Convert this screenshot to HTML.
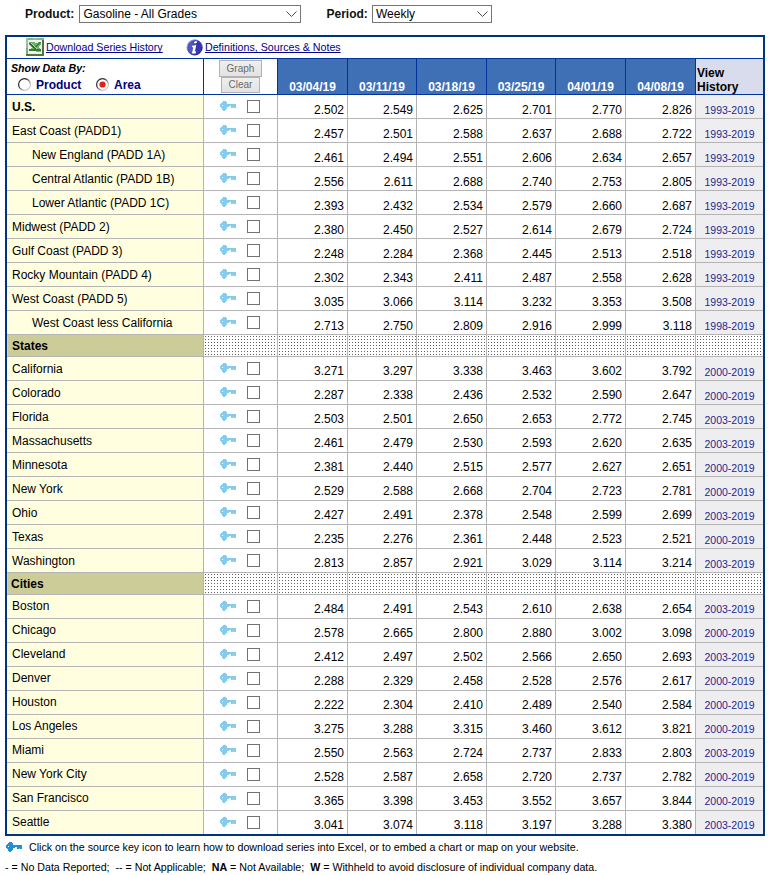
<!DOCTYPE html>
<html><head><meta charset="utf-8"><style>
html,body{margin:0;padding:0;background:#fff;width:770px;height:875px;overflow:hidden;position:relative}
body>div{position:absolute;box-sizing:content-box;font-family:"Liberation Sans",sans-serif}
svg{display:block}
</style></head><body>
<div style="left:25px;top:5.84px;font-size:12px;line-height:16px;font-weight:bold;color:#111;white-space:nowrap;">Product:</div>
<div style="left:79px;top:5px;width:220px;height:16px;border:1px solid #767676;background:#fff"></div>
<div style="left:83.5px;top:5.84px;font-size:12px;line-height:16px;font-weight:normal;color:#000;white-space:nowrap;">Gasoline - All Grades</div>
<div style="left:286px;top:11px;width:11px;height:7px"><svg width="11" height="7" viewBox="0 0 11 7"><path d="M0.5 0.5 L5.5 5.5 L10.5 0.5" fill="none" stroke="#4a4a4a" stroke-width="1"/></svg></div>
<div style="left:326.5px;top:5.84px;font-size:12px;line-height:16px;font-weight:bold;color:#111;white-space:nowrap;">Period:</div>
<div style="left:372px;top:5px;width:118px;height:16px;border:1px solid #767676;background:#fff"></div>
<div style="left:376px;top:5.84px;font-size:12px;line-height:16px;font-weight:normal;color:#000;white-space:nowrap;">Weekly</div>
<div style="left:477px;top:11px;width:11px;height:7px"><svg width="11" height="7" viewBox="0 0 11 7"><path d="M0.5 0.5 L5.5 5.5 L10.5 0.5" fill="none" stroke="#4a4a4a" stroke-width="1"/></svg></div>
<div style="left:5px;top:35px;width:760px;height:2px;background:#003380"></div>
<div style="left:5px;top:834px;width:760px;height:2px;background:#003380"></div>
<div style="left:5px;top:35px;width:2px;height:801px;background:#003380"></div>
<div style="left:763px;top:35px;width:2px;height:801px;background:#003380"></div>
<div style="left:7px;top:58px;width:756px;height:1px;background:#0033a0"></div>
<div style="left:26px;top:38px;width:18px;height:18px"><svg width="18" height="18" viewBox="0 0 18 18" shape-rendering="crispEdges">
<rect x="0" y="0" width="18" height="18" fill="#5e9a5a"/>
<rect x="0" y="0" width="18" height="2" fill="#7dbd7d"/>
<rect x="0" y="0" width="2" height="16" fill="#8ccc8c"/>
<rect x="7" y="0" width="4" height="2" fill="#a3b5a3"/>
<rect x="0" y="6" width="2" height="4" fill="#a3b1a3"/>
<rect x="0" y="10" width="2" height="6" fill="#6fb46f"/>
<rect x="16" y="2" width="2" height="9" fill="#4f6f55"/>
<rect x="16" y="11" width="2" height="7" fill="#3f7a3a"/>
<rect x="0" y="16" width="18" height="2" fill="#4b7a34"/>
<rect x="2" y="2" width="14" height="14" fill="#f1f0f3"/>
<polygon points="3,4 8,4 9,5 11,5 12,4 15,4 15,6 12,9 15,11 15,13 3,13 3,11 6,10 3,7" fill="#6cb46c"/>
<polygon points="3,5 5,5 13,13 10,13" fill="#2f6a2f"/>
<polygon points="13,4 15,4 10,9 8,9" fill="#3f7f32"/>
<polygon points="4,5 5,5 12,12 11,12" fill="#a8e0a8"/>
<rect x="3" y="11" width="12" height="2" fill="#3f7630"/>
<rect x="10" y="13" width="5" height="1" fill="#b5a26a"/>
</svg></div>
<div style="left:46px;top:39.30px;font-size:10.667px;line-height:16px;font-weight:normal;color:#000088;white-space:nowrap;"><span style="text-decoration:underline;text-decoration-skip-ink:none">Download Series History</span></div>
<div style="left:186px;top:39px;width:17px;height:17px"><svg width="17" height="17" viewBox="0 0 17 17">
<defs><linearGradient id="ig" x1="0" y1="0" x2="1" y2="0"><stop offset="0.3" stop-color="#5555c4"/><stop offset="0.6" stop-color="#3535b4"/></linearGradient>
<linearGradient id="ir" x1="0" y1="0" x2="1" y2="1"><stop offset="0.2" stop-color="#7aa8e8"/><stop offset="0.5" stop-color="#3b3bb8"/><stop offset="0.8" stop-color="#101080"/></linearGradient></defs>
<circle cx="8.6" cy="8.4" r="7.6" fill="url(#ig)" stroke="url(#ir)" stroke-width="0.9"/>
<ellipse cx="9.5" cy="3.2" rx="1.6" ry="1.05" transform="rotate(-20 9.5 3.2)" fill="#fff"/>
<path d="M6.2 6.8 L10.3 6.1 L8.9 12.3 L10.1 12.5 L9.7 14.4 L5.9 14.4 L7.3 8.3 L6.0 8.3 Z" fill="#fff"/>
</svg></div>
<div style="left:205px;top:39.30px;font-size:10.667px;line-height:16px;font-weight:normal;color:#000088;white-space:nowrap;"><span style="text-decoration:underline;text-decoration-skip-ink:none">Definitions, Sources &amp; Notes</span></div>
<div style="left:7px;top:94px;width:756px;height:1px;background:#0033a0"></div>
<div style="left:203px;top:59px;width:1px;height:35px;background:#0033a0"></div>
<div style="left:277px;top:59px;width:1px;height:35px;background:#0033a0"></div>
<div style="left:347px;top:59px;width:1px;height:35px;background:#0033a0"></div>
<div style="left:416px;top:59px;width:1px;height:35px;background:#0033a0"></div>
<div style="left:486px;top:59px;width:1px;height:35px;background:#0033a0"></div>
<div style="left:555px;top:59px;width:1px;height:35px;background:#0033a0"></div>
<div style="left:625px;top:59px;width:1px;height:35px;background:#0033a0"></div>
<div style="left:695px;top:59px;width:1px;height:35px;background:#0033a0"></div>
<div style="left:11px;top:60.30px;font-size:10.667px;line-height:16px;font-weight:bold;color:#000;white-space:nowrap;"><i>Show Data By:</i></div>
<div style="left:18px;top:78px;width:13px;height:13px"><svg width="13" height="13" viewBox="0 0 13 13"><defs><linearGradient id="rg18" x1="0" y1="0" x2="1" y2="1"><stop offset="0.35" stop-color="#2a2a2a"/><stop offset="0.75" stop-color="#c8c8c8"/></linearGradient></defs><circle cx="6.5" cy="6.5" r="5.9" fill="#fff" stroke="url(#rg18)" stroke-width="1.2"/></svg></div>
<div style="left:36px;top:76.84px;font-size:12px;line-height:16px;font-weight:bold;color:#000080;white-space:nowrap;">Product</div>
<div style="left:96px;top:78px;width:13px;height:13px"><svg width="13" height="13" viewBox="0 0 13 13"><defs><linearGradient id="rg96" x1="0" y1="0" x2="1" y2="1"><stop offset="0.35" stop-color="#2a2a2a"/><stop offset="0.75" stop-color="#c8c8c8"/></linearGradient></defs><circle cx="6.5" cy="6.5" r="5.9" fill="#fff" stroke="url(#rg96)" stroke-width="1.2"/><circle cx="6.5" cy="6.5" r="3.1" fill="#e0201a"/></svg></div>
<div style="left:114px;top:76.84px;font-size:12px;line-height:16px;font-weight:bold;color:#000080;white-space:nowrap;">Area</div>
<div style="left:219px;top:60px;width:41px;height:15px;border:1px solid #b2b2b2;background:linear-gradient(#efefef,#e2e2e2)"></div>
<div style="left:219px;width:43px;text-align:center;top:60.53px;font-size:10px;line-height:16px;font-weight:normal;color:#6a6a6a;white-space:nowrap;">Graph</div>
<div style="left:221px;top:77px;width:37px;height:14px;border:1px solid #b2b2b2;background:linear-gradient(#efefef,#e2e2e2)"></div>
<div style="left:221px;width:39px;text-align:center;top:76.53px;font-size:10px;line-height:16px;font-weight:normal;color:#6a6a6a;white-space:nowrap;">Clear</div>
<div style="left:278px;top:59px;width:69px;height:35px;background:#3f6fb5"></div>
<div style="left:278px;width:69px;text-align:center;top:78.84px;font-size:12px;line-height:16px;font-weight:bold;color:#fff;white-space:nowrap;">03/04/19</div>
<div style="left:348px;top:59px;width:68px;height:35px;background:#3f6fb5"></div>
<div style="left:348px;width:68px;text-align:center;top:78.84px;font-size:12px;line-height:16px;font-weight:bold;color:#fff;white-space:nowrap;">03/11/19</div>
<div style="left:417px;top:59px;width:69px;height:35px;background:#3f6fb5"></div>
<div style="left:417px;width:69px;text-align:center;top:78.84px;font-size:12px;line-height:16px;font-weight:bold;color:#fff;white-space:nowrap;">03/18/19</div>
<div style="left:487px;top:59px;width:68px;height:35px;background:#3f6fb5"></div>
<div style="left:487px;width:68px;text-align:center;top:78.84px;font-size:12px;line-height:16px;font-weight:bold;color:#fff;white-space:nowrap;">03/25/19</div>
<div style="left:556px;top:59px;width:69px;height:35px;background:#3f6fb5"></div>
<div style="left:556px;width:69px;text-align:center;top:78.84px;font-size:12px;line-height:16px;font-weight:bold;color:#fff;white-space:nowrap;">04/01/19</div>
<div style="left:626px;top:59px;width:69px;height:35px;background:#3f6fb5"></div>
<div style="left:626px;width:69px;text-align:center;top:78.84px;font-size:12px;line-height:16px;font-weight:bold;color:#fff;white-space:nowrap;">04/08/19</div>
<div style="left:696px;top:59px;width:67px;height:35px;background:#d9dcec"></div>
<div style="left:697px;top:64.84px;font-size:12px;line-height:16px;font-weight:bold;color:#000;white-space:nowrap;">View</div>
<div style="left:697px;top:78.84px;font-size:12px;line-height:16px;font-weight:bold;color:#000;white-space:nowrap;">History</div>
<div style="left:7px;top:95px;width:196px;height:23px;background:#ffffe0"></div>
<div style="left:696px;top:95px;width:67px;height:23px;background:#eeeef0"></div>
<div style="left:12px;top:98.84px;font-size:12px;line-height:16px;font-weight:bold;color:#000;white-space:nowrap;">U.S.</div>
<div style="left:220px;top:101px;width:16px;height:10px"><svg width="16" height="10" viewBox="0 0 16 10" shape-rendering="crispEdges"><g fill="#86cbec"><rect x="3" y="0" width="3" height="1"/><rect x="2" y="1" width="5" height="1"/><rect x="1" y="2" width="6" height="1"/><rect x="0" y="3" width="16" height="1"/><rect x="0" y="4" width="16" height="1"/><rect x="0" y="5" width="9" height="1"/><rect x="11" y="5" width="5" height="1"/><rect x="1" y="6" width="6" height="1"/><rect x="11" y="6" width="5" height="1"/><rect x="2" y="7" width="5" height="1"/><rect x="2" y="8" width="4" height="1"/><rect x="3" y="9" width="2" height="1"/></g><rect x="2" y="4" width="1" height="1" fill="#fff"/><rect x="13" y="6" width="1" height="1" fill="#b8e4f0"/></svg></div>
<div style="left:247px;top:100px;width:11px;height:11px;border:1px solid #727272;background:#fff"></div>
<div style="right:426px;top:101.84px;font-size:12px;line-height:16px;font-weight:normal;color:#000;white-space:nowrap;">2.502</div>
<div style="right:357px;top:101.84px;font-size:12px;line-height:16px;font-weight:normal;color:#000;white-space:nowrap;">2.549</div>
<div style="right:287px;top:101.84px;font-size:12px;line-height:16px;font-weight:normal;color:#000;white-space:nowrap;">2.625</div>
<div style="right:218px;top:101.84px;font-size:12px;line-height:16px;font-weight:normal;color:#000;white-space:nowrap;">2.701</div>
<div style="right:148px;top:101.84px;font-size:12px;line-height:16px;font-weight:normal;color:#000;white-space:nowrap;">2.770</div>
<div style="right:78px;top:101.84px;font-size:12px;line-height:16px;font-weight:normal;color:#000;white-space:nowrap;">2.826</div>
<div style="left:704.5px;top:102.36px;font-size:10.5px;line-height:16px;font-weight:normal;color:#26268f;white-space:nowrap;">1993-2019</div>
<div style="left:7px;top:118px;width:756px;height:1px;background:#b4b4b4"></div>
<div style="left:7px;top:119px;width:196px;height:23px;background:#ffffe0"></div>
<div style="left:696px;top:119px;width:67px;height:23px;background:#eeeef0"></div>
<div style="left:12px;top:122.84px;font-size:12px;line-height:16px;font-weight:normal;color:#000;white-space:nowrap;">East Coast (PADD1)</div>
<div style="left:220px;top:125px;width:16px;height:10px"><svg width="16" height="10" viewBox="0 0 16 10" shape-rendering="crispEdges"><g fill="#86cbec"><rect x="3" y="0" width="3" height="1"/><rect x="2" y="1" width="5" height="1"/><rect x="1" y="2" width="6" height="1"/><rect x="0" y="3" width="16" height="1"/><rect x="0" y="4" width="16" height="1"/><rect x="0" y="5" width="9" height="1"/><rect x="11" y="5" width="5" height="1"/><rect x="1" y="6" width="6" height="1"/><rect x="11" y="6" width="5" height="1"/><rect x="2" y="7" width="5" height="1"/><rect x="2" y="8" width="4" height="1"/><rect x="3" y="9" width="2" height="1"/></g><rect x="2" y="4" width="1" height="1" fill="#fff"/><rect x="13" y="6" width="1" height="1" fill="#b8e4f0"/></svg></div>
<div style="left:247px;top:124px;width:11px;height:11px;border:1px solid #727272;background:#fff"></div>
<div style="right:426px;top:125.84px;font-size:12px;line-height:16px;font-weight:normal;color:#000;white-space:nowrap;">2.457</div>
<div style="right:357px;top:125.84px;font-size:12px;line-height:16px;font-weight:normal;color:#000;white-space:nowrap;">2.501</div>
<div style="right:287px;top:125.84px;font-size:12px;line-height:16px;font-weight:normal;color:#000;white-space:nowrap;">2.588</div>
<div style="right:218px;top:125.84px;font-size:12px;line-height:16px;font-weight:normal;color:#000;white-space:nowrap;">2.637</div>
<div style="right:148px;top:125.84px;font-size:12px;line-height:16px;font-weight:normal;color:#000;white-space:nowrap;">2.688</div>
<div style="right:78px;top:125.84px;font-size:12px;line-height:16px;font-weight:normal;color:#000;white-space:nowrap;">2.722</div>
<div style="left:704.5px;top:126.36px;font-size:10.5px;line-height:16px;font-weight:normal;color:#26268f;white-space:nowrap;">1993-2019</div>
<div style="left:7px;top:142px;width:756px;height:1px;background:#b4b4b4"></div>
<div style="left:7px;top:143px;width:196px;height:23px;background:#ffffe0"></div>
<div style="left:696px;top:143px;width:67px;height:23px;background:#eeeef0"></div>
<div style="left:32px;top:146.84px;font-size:12px;line-height:16px;font-weight:normal;color:#000;white-space:nowrap;">New England (PADD 1A)</div>
<div style="left:220px;top:149px;width:16px;height:10px"><svg width="16" height="10" viewBox="0 0 16 10" shape-rendering="crispEdges"><g fill="#86cbec"><rect x="3" y="0" width="3" height="1"/><rect x="2" y="1" width="5" height="1"/><rect x="1" y="2" width="6" height="1"/><rect x="0" y="3" width="16" height="1"/><rect x="0" y="4" width="16" height="1"/><rect x="0" y="5" width="9" height="1"/><rect x="11" y="5" width="5" height="1"/><rect x="1" y="6" width="6" height="1"/><rect x="11" y="6" width="5" height="1"/><rect x="2" y="7" width="5" height="1"/><rect x="2" y="8" width="4" height="1"/><rect x="3" y="9" width="2" height="1"/></g><rect x="2" y="4" width="1" height="1" fill="#fff"/><rect x="13" y="6" width="1" height="1" fill="#b8e4f0"/></svg></div>
<div style="left:247px;top:148px;width:11px;height:11px;border:1px solid #727272;background:#fff"></div>
<div style="right:426px;top:149.84px;font-size:12px;line-height:16px;font-weight:normal;color:#000;white-space:nowrap;">2.461</div>
<div style="right:357px;top:149.84px;font-size:12px;line-height:16px;font-weight:normal;color:#000;white-space:nowrap;">2.494</div>
<div style="right:287px;top:149.84px;font-size:12px;line-height:16px;font-weight:normal;color:#000;white-space:nowrap;">2.551</div>
<div style="right:218px;top:149.84px;font-size:12px;line-height:16px;font-weight:normal;color:#000;white-space:nowrap;">2.606</div>
<div style="right:148px;top:149.84px;font-size:12px;line-height:16px;font-weight:normal;color:#000;white-space:nowrap;">2.634</div>
<div style="right:78px;top:149.84px;font-size:12px;line-height:16px;font-weight:normal;color:#000;white-space:nowrap;">2.657</div>
<div style="left:704.5px;top:150.36px;font-size:10.5px;line-height:16px;font-weight:normal;color:#26268f;white-space:nowrap;">1993-2019</div>
<div style="left:7px;top:166px;width:756px;height:1px;background:#b4b4b4"></div>
<div style="left:7px;top:167px;width:196px;height:23px;background:#ffffe0"></div>
<div style="left:696px;top:167px;width:67px;height:23px;background:#eeeef0"></div>
<div style="left:32px;top:170.84px;font-size:12px;line-height:16px;font-weight:normal;color:#000;white-space:nowrap;">Central Atlantic (PADD 1B)</div>
<div style="left:220px;top:173px;width:16px;height:10px"><svg width="16" height="10" viewBox="0 0 16 10" shape-rendering="crispEdges"><g fill="#86cbec"><rect x="3" y="0" width="3" height="1"/><rect x="2" y="1" width="5" height="1"/><rect x="1" y="2" width="6" height="1"/><rect x="0" y="3" width="16" height="1"/><rect x="0" y="4" width="16" height="1"/><rect x="0" y="5" width="9" height="1"/><rect x="11" y="5" width="5" height="1"/><rect x="1" y="6" width="6" height="1"/><rect x="11" y="6" width="5" height="1"/><rect x="2" y="7" width="5" height="1"/><rect x="2" y="8" width="4" height="1"/><rect x="3" y="9" width="2" height="1"/></g><rect x="2" y="4" width="1" height="1" fill="#fff"/><rect x="13" y="6" width="1" height="1" fill="#b8e4f0"/></svg></div>
<div style="left:247px;top:172px;width:11px;height:11px;border:1px solid #727272;background:#fff"></div>
<div style="right:426px;top:173.84px;font-size:12px;line-height:16px;font-weight:normal;color:#000;white-space:nowrap;">2.556</div>
<div style="right:357px;top:173.84px;font-size:12px;line-height:16px;font-weight:normal;color:#000;white-space:nowrap;">2.611</div>
<div style="right:287px;top:173.84px;font-size:12px;line-height:16px;font-weight:normal;color:#000;white-space:nowrap;">2.688</div>
<div style="right:218px;top:173.84px;font-size:12px;line-height:16px;font-weight:normal;color:#000;white-space:nowrap;">2.740</div>
<div style="right:148px;top:173.84px;font-size:12px;line-height:16px;font-weight:normal;color:#000;white-space:nowrap;">2.753</div>
<div style="right:78px;top:173.84px;font-size:12px;line-height:16px;font-weight:normal;color:#000;white-space:nowrap;">2.805</div>
<div style="left:704.5px;top:174.36px;font-size:10.5px;line-height:16px;font-weight:normal;color:#26268f;white-space:nowrap;">1993-2019</div>
<div style="left:7px;top:190px;width:756px;height:1px;background:#b4b4b4"></div>
<div style="left:7px;top:191px;width:196px;height:23px;background:#ffffe0"></div>
<div style="left:696px;top:191px;width:67px;height:23px;background:#eeeef0"></div>
<div style="left:32px;top:194.84px;font-size:12px;line-height:16px;font-weight:normal;color:#000;white-space:nowrap;">Lower Atlantic (PADD 1C)</div>
<div style="left:220px;top:197px;width:16px;height:10px"><svg width="16" height="10" viewBox="0 0 16 10" shape-rendering="crispEdges"><g fill="#86cbec"><rect x="3" y="0" width="3" height="1"/><rect x="2" y="1" width="5" height="1"/><rect x="1" y="2" width="6" height="1"/><rect x="0" y="3" width="16" height="1"/><rect x="0" y="4" width="16" height="1"/><rect x="0" y="5" width="9" height="1"/><rect x="11" y="5" width="5" height="1"/><rect x="1" y="6" width="6" height="1"/><rect x="11" y="6" width="5" height="1"/><rect x="2" y="7" width="5" height="1"/><rect x="2" y="8" width="4" height="1"/><rect x="3" y="9" width="2" height="1"/></g><rect x="2" y="4" width="1" height="1" fill="#fff"/><rect x="13" y="6" width="1" height="1" fill="#b8e4f0"/></svg></div>
<div style="left:247px;top:196px;width:11px;height:11px;border:1px solid #727272;background:#fff"></div>
<div style="right:426px;top:197.84px;font-size:12px;line-height:16px;font-weight:normal;color:#000;white-space:nowrap;">2.393</div>
<div style="right:357px;top:197.84px;font-size:12px;line-height:16px;font-weight:normal;color:#000;white-space:nowrap;">2.432</div>
<div style="right:287px;top:197.84px;font-size:12px;line-height:16px;font-weight:normal;color:#000;white-space:nowrap;">2.534</div>
<div style="right:218px;top:197.84px;font-size:12px;line-height:16px;font-weight:normal;color:#000;white-space:nowrap;">2.579</div>
<div style="right:148px;top:197.84px;font-size:12px;line-height:16px;font-weight:normal;color:#000;white-space:nowrap;">2.660</div>
<div style="right:78px;top:197.84px;font-size:12px;line-height:16px;font-weight:normal;color:#000;white-space:nowrap;">2.687</div>
<div style="left:704.5px;top:198.36px;font-size:10.5px;line-height:16px;font-weight:normal;color:#26268f;white-space:nowrap;">1993-2019</div>
<div style="left:7px;top:214px;width:756px;height:1px;background:#b4b4b4"></div>
<div style="left:7px;top:215px;width:196px;height:23px;background:#ffffe0"></div>
<div style="left:696px;top:215px;width:67px;height:23px;background:#eeeef0"></div>
<div style="left:12px;top:218.84px;font-size:12px;line-height:16px;font-weight:normal;color:#000;white-space:nowrap;">Midwest (PADD 2)</div>
<div style="left:220px;top:221px;width:16px;height:10px"><svg width="16" height="10" viewBox="0 0 16 10" shape-rendering="crispEdges"><g fill="#86cbec"><rect x="3" y="0" width="3" height="1"/><rect x="2" y="1" width="5" height="1"/><rect x="1" y="2" width="6" height="1"/><rect x="0" y="3" width="16" height="1"/><rect x="0" y="4" width="16" height="1"/><rect x="0" y="5" width="9" height="1"/><rect x="11" y="5" width="5" height="1"/><rect x="1" y="6" width="6" height="1"/><rect x="11" y="6" width="5" height="1"/><rect x="2" y="7" width="5" height="1"/><rect x="2" y="8" width="4" height="1"/><rect x="3" y="9" width="2" height="1"/></g><rect x="2" y="4" width="1" height="1" fill="#fff"/><rect x="13" y="6" width="1" height="1" fill="#b8e4f0"/></svg></div>
<div style="left:247px;top:220px;width:11px;height:11px;border:1px solid #727272;background:#fff"></div>
<div style="right:426px;top:221.84px;font-size:12px;line-height:16px;font-weight:normal;color:#000;white-space:nowrap;">2.380</div>
<div style="right:357px;top:221.84px;font-size:12px;line-height:16px;font-weight:normal;color:#000;white-space:nowrap;">2.450</div>
<div style="right:287px;top:221.84px;font-size:12px;line-height:16px;font-weight:normal;color:#000;white-space:nowrap;">2.527</div>
<div style="right:218px;top:221.84px;font-size:12px;line-height:16px;font-weight:normal;color:#000;white-space:nowrap;">2.614</div>
<div style="right:148px;top:221.84px;font-size:12px;line-height:16px;font-weight:normal;color:#000;white-space:nowrap;">2.679</div>
<div style="right:78px;top:221.84px;font-size:12px;line-height:16px;font-weight:normal;color:#000;white-space:nowrap;">2.724</div>
<div style="left:704.5px;top:222.36px;font-size:10.5px;line-height:16px;font-weight:normal;color:#26268f;white-space:nowrap;">1993-2019</div>
<div style="left:7px;top:238px;width:756px;height:1px;background:#b4b4b4"></div>
<div style="left:7px;top:239px;width:196px;height:23px;background:#ffffe0"></div>
<div style="left:696px;top:239px;width:67px;height:23px;background:#eeeef0"></div>
<div style="left:12px;top:242.84px;font-size:12px;line-height:16px;font-weight:normal;color:#000;white-space:nowrap;">Gulf Coast (PADD 3)</div>
<div style="left:220px;top:245px;width:16px;height:10px"><svg width="16" height="10" viewBox="0 0 16 10" shape-rendering="crispEdges"><g fill="#86cbec"><rect x="3" y="0" width="3" height="1"/><rect x="2" y="1" width="5" height="1"/><rect x="1" y="2" width="6" height="1"/><rect x="0" y="3" width="16" height="1"/><rect x="0" y="4" width="16" height="1"/><rect x="0" y="5" width="9" height="1"/><rect x="11" y="5" width="5" height="1"/><rect x="1" y="6" width="6" height="1"/><rect x="11" y="6" width="5" height="1"/><rect x="2" y="7" width="5" height="1"/><rect x="2" y="8" width="4" height="1"/><rect x="3" y="9" width="2" height="1"/></g><rect x="2" y="4" width="1" height="1" fill="#fff"/><rect x="13" y="6" width="1" height="1" fill="#b8e4f0"/></svg></div>
<div style="left:247px;top:244px;width:11px;height:11px;border:1px solid #727272;background:#fff"></div>
<div style="right:426px;top:245.84px;font-size:12px;line-height:16px;font-weight:normal;color:#000;white-space:nowrap;">2.248</div>
<div style="right:357px;top:245.84px;font-size:12px;line-height:16px;font-weight:normal;color:#000;white-space:nowrap;">2.284</div>
<div style="right:287px;top:245.84px;font-size:12px;line-height:16px;font-weight:normal;color:#000;white-space:nowrap;">2.368</div>
<div style="right:218px;top:245.84px;font-size:12px;line-height:16px;font-weight:normal;color:#000;white-space:nowrap;">2.445</div>
<div style="right:148px;top:245.84px;font-size:12px;line-height:16px;font-weight:normal;color:#000;white-space:nowrap;">2.513</div>
<div style="right:78px;top:245.84px;font-size:12px;line-height:16px;font-weight:normal;color:#000;white-space:nowrap;">2.518</div>
<div style="left:704.5px;top:246.36px;font-size:10.5px;line-height:16px;font-weight:normal;color:#26268f;white-space:nowrap;">1993-2019</div>
<div style="left:7px;top:262px;width:756px;height:1px;background:#b4b4b4"></div>
<div style="left:7px;top:263px;width:196px;height:23px;background:#ffffe0"></div>
<div style="left:696px;top:263px;width:67px;height:23px;background:#eeeef0"></div>
<div style="left:12px;top:266.84px;font-size:12px;line-height:16px;font-weight:normal;color:#000;white-space:nowrap;">Rocky Mountain (PADD 4)</div>
<div style="left:220px;top:269px;width:16px;height:10px"><svg width="16" height="10" viewBox="0 0 16 10" shape-rendering="crispEdges"><g fill="#86cbec"><rect x="3" y="0" width="3" height="1"/><rect x="2" y="1" width="5" height="1"/><rect x="1" y="2" width="6" height="1"/><rect x="0" y="3" width="16" height="1"/><rect x="0" y="4" width="16" height="1"/><rect x="0" y="5" width="9" height="1"/><rect x="11" y="5" width="5" height="1"/><rect x="1" y="6" width="6" height="1"/><rect x="11" y="6" width="5" height="1"/><rect x="2" y="7" width="5" height="1"/><rect x="2" y="8" width="4" height="1"/><rect x="3" y="9" width="2" height="1"/></g><rect x="2" y="4" width="1" height="1" fill="#fff"/><rect x="13" y="6" width="1" height="1" fill="#b8e4f0"/></svg></div>
<div style="left:247px;top:268px;width:11px;height:11px;border:1px solid #727272;background:#fff"></div>
<div style="right:426px;top:269.84px;font-size:12px;line-height:16px;font-weight:normal;color:#000;white-space:nowrap;">2.302</div>
<div style="right:357px;top:269.84px;font-size:12px;line-height:16px;font-weight:normal;color:#000;white-space:nowrap;">2.343</div>
<div style="right:287px;top:269.84px;font-size:12px;line-height:16px;font-weight:normal;color:#000;white-space:nowrap;">2.411</div>
<div style="right:218px;top:269.84px;font-size:12px;line-height:16px;font-weight:normal;color:#000;white-space:nowrap;">2.487</div>
<div style="right:148px;top:269.84px;font-size:12px;line-height:16px;font-weight:normal;color:#000;white-space:nowrap;">2.558</div>
<div style="right:78px;top:269.84px;font-size:12px;line-height:16px;font-weight:normal;color:#000;white-space:nowrap;">2.628</div>
<div style="left:704.5px;top:270.36px;font-size:10.5px;line-height:16px;font-weight:normal;color:#26268f;white-space:nowrap;">1993-2019</div>
<div style="left:7px;top:286px;width:756px;height:1px;background:#b4b4b4"></div>
<div style="left:7px;top:287px;width:196px;height:23px;background:#ffffe0"></div>
<div style="left:696px;top:287px;width:67px;height:23px;background:#eeeef0"></div>
<div style="left:12px;top:290.84px;font-size:12px;line-height:16px;font-weight:normal;color:#000;white-space:nowrap;">West Coast (PADD 5)</div>
<div style="left:220px;top:293px;width:16px;height:10px"><svg width="16" height="10" viewBox="0 0 16 10" shape-rendering="crispEdges"><g fill="#86cbec"><rect x="3" y="0" width="3" height="1"/><rect x="2" y="1" width="5" height="1"/><rect x="1" y="2" width="6" height="1"/><rect x="0" y="3" width="16" height="1"/><rect x="0" y="4" width="16" height="1"/><rect x="0" y="5" width="9" height="1"/><rect x="11" y="5" width="5" height="1"/><rect x="1" y="6" width="6" height="1"/><rect x="11" y="6" width="5" height="1"/><rect x="2" y="7" width="5" height="1"/><rect x="2" y="8" width="4" height="1"/><rect x="3" y="9" width="2" height="1"/></g><rect x="2" y="4" width="1" height="1" fill="#fff"/><rect x="13" y="6" width="1" height="1" fill="#b8e4f0"/></svg></div>
<div style="left:247px;top:292px;width:11px;height:11px;border:1px solid #727272;background:#fff"></div>
<div style="right:426px;top:293.84px;font-size:12px;line-height:16px;font-weight:normal;color:#000;white-space:nowrap;">3.035</div>
<div style="right:357px;top:293.84px;font-size:12px;line-height:16px;font-weight:normal;color:#000;white-space:nowrap;">3.066</div>
<div style="right:287px;top:293.84px;font-size:12px;line-height:16px;font-weight:normal;color:#000;white-space:nowrap;">3.114</div>
<div style="right:218px;top:293.84px;font-size:12px;line-height:16px;font-weight:normal;color:#000;white-space:nowrap;">3.232</div>
<div style="right:148px;top:293.84px;font-size:12px;line-height:16px;font-weight:normal;color:#000;white-space:nowrap;">3.353</div>
<div style="right:78px;top:293.84px;font-size:12px;line-height:16px;font-weight:normal;color:#000;white-space:nowrap;">3.508</div>
<div style="left:704.5px;top:294.36px;font-size:10.5px;line-height:16px;font-weight:normal;color:#26268f;white-space:nowrap;">1993-2019</div>
<div style="left:7px;top:310px;width:756px;height:1px;background:#b4b4b4"></div>
<div style="left:7px;top:311px;width:196px;height:23px;background:#ffffe0"></div>
<div style="left:696px;top:311px;width:67px;height:23px;background:#eeeef0"></div>
<div style="left:32px;top:314.84px;font-size:12px;line-height:16px;font-weight:normal;color:#000;white-space:nowrap;">West Coast less California</div>
<div style="left:220px;top:317px;width:16px;height:10px"><svg width="16" height="10" viewBox="0 0 16 10" shape-rendering="crispEdges"><g fill="#86cbec"><rect x="3" y="0" width="3" height="1"/><rect x="2" y="1" width="5" height="1"/><rect x="1" y="2" width="6" height="1"/><rect x="0" y="3" width="16" height="1"/><rect x="0" y="4" width="16" height="1"/><rect x="0" y="5" width="9" height="1"/><rect x="11" y="5" width="5" height="1"/><rect x="1" y="6" width="6" height="1"/><rect x="11" y="6" width="5" height="1"/><rect x="2" y="7" width="5" height="1"/><rect x="2" y="8" width="4" height="1"/><rect x="3" y="9" width="2" height="1"/></g><rect x="2" y="4" width="1" height="1" fill="#fff"/><rect x="13" y="6" width="1" height="1" fill="#b8e4f0"/></svg></div>
<div style="left:247px;top:316px;width:11px;height:11px;border:1px solid #727272;background:#fff"></div>
<div style="right:426px;top:317.84px;font-size:12px;line-height:16px;font-weight:normal;color:#000;white-space:nowrap;">2.713</div>
<div style="right:357px;top:317.84px;font-size:12px;line-height:16px;font-weight:normal;color:#000;white-space:nowrap;">2.750</div>
<div style="right:287px;top:317.84px;font-size:12px;line-height:16px;font-weight:normal;color:#000;white-space:nowrap;">2.809</div>
<div style="right:218px;top:317.84px;font-size:12px;line-height:16px;font-weight:normal;color:#000;white-space:nowrap;">2.916</div>
<div style="right:148px;top:317.84px;font-size:12px;line-height:16px;font-weight:normal;color:#000;white-space:nowrap;">2.999</div>
<div style="right:78px;top:317.84px;font-size:12px;line-height:16px;font-weight:normal;color:#000;white-space:nowrap;">3.118</div>
<div style="left:704.5px;top:318.36px;font-size:10.5px;line-height:16px;font-weight:normal;color:#26268f;white-space:nowrap;">1998-2019</div>
<div style="left:7px;top:334px;width:756px;height:1px;background:#b4b4b4"></div>
<div style="left:7px;top:335px;width:196px;height:21px;background:#cccc99"></div>
<div style="left:7px;top:335px;width:1px;height:21px;background:#dcd79e"></div>
<div style="left:12px;top:337.84px;font-size:12px;line-height:16px;font-weight:bold;color:#000;white-space:nowrap;">States</div>
<div style="left:204px;top:335px;width:73px;height:21px;background-color:#606060;background-image:linear-gradient(to bottom, transparent 1px, #fff 1px),linear-gradient(to right, transparent 1px, #fff 1px);background-size:3px 3px;background-position:1px 1px"></div>
<div style="left:204px;top:335px;width:73px;height:1px;background:#fff"></div>
<div style="left:204px;top:335px;width:1px;height:21px;background:#fff"></div>
<div style="left:278px;top:335px;width:69px;height:21px;background-color:#606060;background-image:linear-gradient(to bottom, transparent 1px, #fff 1px),linear-gradient(to right, transparent 1px, #fff 1px);background-size:3px 3px;background-position:1px 1px"></div>
<div style="left:278px;top:335px;width:69px;height:1px;background:#fff"></div>
<div style="left:278px;top:335px;width:1px;height:21px;background:#fff"></div>
<div style="left:348px;top:335px;width:68px;height:21px;background-color:#606060;background-image:linear-gradient(to bottom, transparent 1px, #fff 1px),linear-gradient(to right, transparent 1px, #fff 1px);background-size:3px 3px;background-position:1px 1px"></div>
<div style="left:348px;top:335px;width:68px;height:1px;background:#fff"></div>
<div style="left:348px;top:335px;width:1px;height:21px;background:#fff"></div>
<div style="left:417px;top:335px;width:69px;height:21px;background-color:#606060;background-image:linear-gradient(to bottom, transparent 1px, #fff 1px),linear-gradient(to right, transparent 1px, #fff 1px);background-size:3px 3px;background-position:1px 1px"></div>
<div style="left:417px;top:335px;width:69px;height:1px;background:#fff"></div>
<div style="left:417px;top:335px;width:1px;height:21px;background:#fff"></div>
<div style="left:487px;top:335px;width:68px;height:21px;background-color:#606060;background-image:linear-gradient(to bottom, transparent 1px, #fff 1px),linear-gradient(to right, transparent 1px, #fff 1px);background-size:3px 3px;background-position:1px 1px"></div>
<div style="left:487px;top:335px;width:68px;height:1px;background:#fff"></div>
<div style="left:487px;top:335px;width:1px;height:21px;background:#fff"></div>
<div style="left:556px;top:335px;width:69px;height:21px;background-color:#606060;background-image:linear-gradient(to bottom, transparent 1px, #fff 1px),linear-gradient(to right, transparent 1px, #fff 1px);background-size:3px 3px;background-position:1px 1px"></div>
<div style="left:556px;top:335px;width:69px;height:1px;background:#fff"></div>
<div style="left:556px;top:335px;width:1px;height:21px;background:#fff"></div>
<div style="left:626px;top:335px;width:69px;height:21px;background-color:#606060;background-image:linear-gradient(to bottom, transparent 1px, #fff 1px),linear-gradient(to right, transparent 1px, #fff 1px);background-size:3px 3px;background-position:1px 1px"></div>
<div style="left:626px;top:335px;width:69px;height:1px;background:#fff"></div>
<div style="left:626px;top:335px;width:1px;height:21px;background:#fff"></div>
<div style="left:696px;top:335px;width:67px;height:21px;background-color:#606060;background-image:linear-gradient(to bottom, transparent 1px, #fff 1px),linear-gradient(to right, transparent 1px, #fff 1px);background-size:3px 3px;background-position:1px 1px"></div>
<div style="left:696px;top:335px;width:67px;height:1px;background:#fff"></div>
<div style="left:696px;top:335px;width:1px;height:21px;background:#fff"></div>
<div style="left:7px;top:356px;width:756px;height:1px;background:#b4b4b4"></div>
<div style="left:7px;top:357px;width:196px;height:23px;background:#ffffe0"></div>
<div style="left:696px;top:357px;width:67px;height:23px;background:#eeeef0"></div>
<div style="left:12px;top:360.84px;font-size:12px;line-height:16px;font-weight:normal;color:#000;white-space:nowrap;">California</div>
<div style="left:220px;top:363px;width:16px;height:10px"><svg width="16" height="10" viewBox="0 0 16 10" shape-rendering="crispEdges"><g fill="#86cbec"><rect x="3" y="0" width="3" height="1"/><rect x="2" y="1" width="5" height="1"/><rect x="1" y="2" width="6" height="1"/><rect x="0" y="3" width="16" height="1"/><rect x="0" y="4" width="16" height="1"/><rect x="0" y="5" width="9" height="1"/><rect x="11" y="5" width="5" height="1"/><rect x="1" y="6" width="6" height="1"/><rect x="11" y="6" width="5" height="1"/><rect x="2" y="7" width="5" height="1"/><rect x="2" y="8" width="4" height="1"/><rect x="3" y="9" width="2" height="1"/></g><rect x="2" y="4" width="1" height="1" fill="#fff"/><rect x="13" y="6" width="1" height="1" fill="#b8e4f0"/></svg></div>
<div style="left:247px;top:362px;width:11px;height:11px;border:1px solid #727272;background:#fff"></div>
<div style="right:426px;top:362.84px;font-size:12px;line-height:16px;font-weight:normal;color:#000;white-space:nowrap;">3.271</div>
<div style="right:357px;top:362.84px;font-size:12px;line-height:16px;font-weight:normal;color:#000;white-space:nowrap;">3.297</div>
<div style="right:287px;top:362.84px;font-size:12px;line-height:16px;font-weight:normal;color:#000;white-space:nowrap;">3.338</div>
<div style="right:218px;top:362.84px;font-size:12px;line-height:16px;font-weight:normal;color:#000;white-space:nowrap;">3.463</div>
<div style="right:148px;top:362.84px;font-size:12px;line-height:16px;font-weight:normal;color:#000;white-space:nowrap;">3.602</div>
<div style="right:78px;top:362.84px;font-size:12px;line-height:16px;font-weight:normal;color:#000;white-space:nowrap;">3.792</div>
<div style="left:704.5px;top:364.36px;font-size:10.5px;line-height:16px;font-weight:normal;color:#26268f;white-space:nowrap;">2000-2019</div>
<div style="left:7px;top:380px;width:756px;height:1px;background:#b4b4b4"></div>
<div style="left:7px;top:381px;width:196px;height:23px;background:#ffffe0"></div>
<div style="left:696px;top:381px;width:67px;height:23px;background:#eeeef0"></div>
<div style="left:12px;top:384.84px;font-size:12px;line-height:16px;font-weight:normal;color:#000;white-space:nowrap;">Colorado</div>
<div style="left:220px;top:387px;width:16px;height:10px"><svg width="16" height="10" viewBox="0 0 16 10" shape-rendering="crispEdges"><g fill="#86cbec"><rect x="3" y="0" width="3" height="1"/><rect x="2" y="1" width="5" height="1"/><rect x="1" y="2" width="6" height="1"/><rect x="0" y="3" width="16" height="1"/><rect x="0" y="4" width="16" height="1"/><rect x="0" y="5" width="9" height="1"/><rect x="11" y="5" width="5" height="1"/><rect x="1" y="6" width="6" height="1"/><rect x="11" y="6" width="5" height="1"/><rect x="2" y="7" width="5" height="1"/><rect x="2" y="8" width="4" height="1"/><rect x="3" y="9" width="2" height="1"/></g><rect x="2" y="4" width="1" height="1" fill="#fff"/><rect x="13" y="6" width="1" height="1" fill="#b8e4f0"/></svg></div>
<div style="left:247px;top:386px;width:11px;height:11px;border:1px solid #727272;background:#fff"></div>
<div style="right:426px;top:386.84px;font-size:12px;line-height:16px;font-weight:normal;color:#000;white-space:nowrap;">2.287</div>
<div style="right:357px;top:386.84px;font-size:12px;line-height:16px;font-weight:normal;color:#000;white-space:nowrap;">2.338</div>
<div style="right:287px;top:386.84px;font-size:12px;line-height:16px;font-weight:normal;color:#000;white-space:nowrap;">2.436</div>
<div style="right:218px;top:386.84px;font-size:12px;line-height:16px;font-weight:normal;color:#000;white-space:nowrap;">2.532</div>
<div style="right:148px;top:386.84px;font-size:12px;line-height:16px;font-weight:normal;color:#000;white-space:nowrap;">2.590</div>
<div style="right:78px;top:386.84px;font-size:12px;line-height:16px;font-weight:normal;color:#000;white-space:nowrap;">2.647</div>
<div style="left:704.5px;top:388.36px;font-size:10.5px;line-height:16px;font-weight:normal;color:#26268f;white-space:nowrap;">2000-2019</div>
<div style="left:7px;top:404px;width:756px;height:1px;background:#b4b4b4"></div>
<div style="left:7px;top:405px;width:196px;height:23px;background:#ffffe0"></div>
<div style="left:696px;top:405px;width:67px;height:23px;background:#eeeef0"></div>
<div style="left:12px;top:408.84px;font-size:12px;line-height:16px;font-weight:normal;color:#000;white-space:nowrap;">Florida</div>
<div style="left:220px;top:411px;width:16px;height:10px"><svg width="16" height="10" viewBox="0 0 16 10" shape-rendering="crispEdges"><g fill="#86cbec"><rect x="3" y="0" width="3" height="1"/><rect x="2" y="1" width="5" height="1"/><rect x="1" y="2" width="6" height="1"/><rect x="0" y="3" width="16" height="1"/><rect x="0" y="4" width="16" height="1"/><rect x="0" y="5" width="9" height="1"/><rect x="11" y="5" width="5" height="1"/><rect x="1" y="6" width="6" height="1"/><rect x="11" y="6" width="5" height="1"/><rect x="2" y="7" width="5" height="1"/><rect x="2" y="8" width="4" height="1"/><rect x="3" y="9" width="2" height="1"/></g><rect x="2" y="4" width="1" height="1" fill="#fff"/><rect x="13" y="6" width="1" height="1" fill="#b8e4f0"/></svg></div>
<div style="left:247px;top:410px;width:11px;height:11px;border:1px solid #727272;background:#fff"></div>
<div style="right:426px;top:410.84px;font-size:12px;line-height:16px;font-weight:normal;color:#000;white-space:nowrap;">2.503</div>
<div style="right:357px;top:410.84px;font-size:12px;line-height:16px;font-weight:normal;color:#000;white-space:nowrap;">2.501</div>
<div style="right:287px;top:410.84px;font-size:12px;line-height:16px;font-weight:normal;color:#000;white-space:nowrap;">2.650</div>
<div style="right:218px;top:410.84px;font-size:12px;line-height:16px;font-weight:normal;color:#000;white-space:nowrap;">2.653</div>
<div style="right:148px;top:410.84px;font-size:12px;line-height:16px;font-weight:normal;color:#000;white-space:nowrap;">2.772</div>
<div style="right:78px;top:410.84px;font-size:12px;line-height:16px;font-weight:normal;color:#000;white-space:nowrap;">2.745</div>
<div style="left:704.5px;top:412.36px;font-size:10.5px;line-height:16px;font-weight:normal;color:#26268f;white-space:nowrap;">2003-2019</div>
<div style="left:7px;top:428px;width:756px;height:1px;background:#b4b4b4"></div>
<div style="left:7px;top:429px;width:196px;height:23px;background:#ffffe0"></div>
<div style="left:696px;top:429px;width:67px;height:23px;background:#eeeef0"></div>
<div style="left:12px;top:432.84px;font-size:12px;line-height:16px;font-weight:normal;color:#000;white-space:nowrap;">Massachusetts</div>
<div style="left:220px;top:435px;width:16px;height:10px"><svg width="16" height="10" viewBox="0 0 16 10" shape-rendering="crispEdges"><g fill="#86cbec"><rect x="3" y="0" width="3" height="1"/><rect x="2" y="1" width="5" height="1"/><rect x="1" y="2" width="6" height="1"/><rect x="0" y="3" width="16" height="1"/><rect x="0" y="4" width="16" height="1"/><rect x="0" y="5" width="9" height="1"/><rect x="11" y="5" width="5" height="1"/><rect x="1" y="6" width="6" height="1"/><rect x="11" y="6" width="5" height="1"/><rect x="2" y="7" width="5" height="1"/><rect x="2" y="8" width="4" height="1"/><rect x="3" y="9" width="2" height="1"/></g><rect x="2" y="4" width="1" height="1" fill="#fff"/><rect x="13" y="6" width="1" height="1" fill="#b8e4f0"/></svg></div>
<div style="left:247px;top:434px;width:11px;height:11px;border:1px solid #727272;background:#fff"></div>
<div style="right:426px;top:434.84px;font-size:12px;line-height:16px;font-weight:normal;color:#000;white-space:nowrap;">2.461</div>
<div style="right:357px;top:434.84px;font-size:12px;line-height:16px;font-weight:normal;color:#000;white-space:nowrap;">2.479</div>
<div style="right:287px;top:434.84px;font-size:12px;line-height:16px;font-weight:normal;color:#000;white-space:nowrap;">2.530</div>
<div style="right:218px;top:434.84px;font-size:12px;line-height:16px;font-weight:normal;color:#000;white-space:nowrap;">2.593</div>
<div style="right:148px;top:434.84px;font-size:12px;line-height:16px;font-weight:normal;color:#000;white-space:nowrap;">2.620</div>
<div style="right:78px;top:434.84px;font-size:12px;line-height:16px;font-weight:normal;color:#000;white-space:nowrap;">2.635</div>
<div style="left:704.5px;top:436.36px;font-size:10.5px;line-height:16px;font-weight:normal;color:#26268f;white-space:nowrap;">2003-2019</div>
<div style="left:7px;top:452px;width:756px;height:1px;background:#b4b4b4"></div>
<div style="left:7px;top:453px;width:196px;height:23px;background:#ffffe0"></div>
<div style="left:696px;top:453px;width:67px;height:23px;background:#eeeef0"></div>
<div style="left:12px;top:456.84px;font-size:12px;line-height:16px;font-weight:normal;color:#000;white-space:nowrap;">Minnesota</div>
<div style="left:220px;top:459px;width:16px;height:10px"><svg width="16" height="10" viewBox="0 0 16 10" shape-rendering="crispEdges"><g fill="#86cbec"><rect x="3" y="0" width="3" height="1"/><rect x="2" y="1" width="5" height="1"/><rect x="1" y="2" width="6" height="1"/><rect x="0" y="3" width="16" height="1"/><rect x="0" y="4" width="16" height="1"/><rect x="0" y="5" width="9" height="1"/><rect x="11" y="5" width="5" height="1"/><rect x="1" y="6" width="6" height="1"/><rect x="11" y="6" width="5" height="1"/><rect x="2" y="7" width="5" height="1"/><rect x="2" y="8" width="4" height="1"/><rect x="3" y="9" width="2" height="1"/></g><rect x="2" y="4" width="1" height="1" fill="#fff"/><rect x="13" y="6" width="1" height="1" fill="#b8e4f0"/></svg></div>
<div style="left:247px;top:458px;width:11px;height:11px;border:1px solid #727272;background:#fff"></div>
<div style="right:426px;top:458.84px;font-size:12px;line-height:16px;font-weight:normal;color:#000;white-space:nowrap;">2.381</div>
<div style="right:357px;top:458.84px;font-size:12px;line-height:16px;font-weight:normal;color:#000;white-space:nowrap;">2.440</div>
<div style="right:287px;top:458.84px;font-size:12px;line-height:16px;font-weight:normal;color:#000;white-space:nowrap;">2.515</div>
<div style="right:218px;top:458.84px;font-size:12px;line-height:16px;font-weight:normal;color:#000;white-space:nowrap;">2.577</div>
<div style="right:148px;top:458.84px;font-size:12px;line-height:16px;font-weight:normal;color:#000;white-space:nowrap;">2.627</div>
<div style="right:78px;top:458.84px;font-size:12px;line-height:16px;font-weight:normal;color:#000;white-space:nowrap;">2.651</div>
<div style="left:704.5px;top:460.36px;font-size:10.5px;line-height:16px;font-weight:normal;color:#26268f;white-space:nowrap;">2000-2019</div>
<div style="left:7px;top:476px;width:756px;height:1px;background:#b4b4b4"></div>
<div style="left:7px;top:477px;width:196px;height:23px;background:#ffffe0"></div>
<div style="left:696px;top:477px;width:67px;height:23px;background:#eeeef0"></div>
<div style="left:12px;top:480.84px;font-size:12px;line-height:16px;font-weight:normal;color:#000;white-space:nowrap;">New York</div>
<div style="left:220px;top:483px;width:16px;height:10px"><svg width="16" height="10" viewBox="0 0 16 10" shape-rendering="crispEdges"><g fill="#86cbec"><rect x="3" y="0" width="3" height="1"/><rect x="2" y="1" width="5" height="1"/><rect x="1" y="2" width="6" height="1"/><rect x="0" y="3" width="16" height="1"/><rect x="0" y="4" width="16" height="1"/><rect x="0" y="5" width="9" height="1"/><rect x="11" y="5" width="5" height="1"/><rect x="1" y="6" width="6" height="1"/><rect x="11" y="6" width="5" height="1"/><rect x="2" y="7" width="5" height="1"/><rect x="2" y="8" width="4" height="1"/><rect x="3" y="9" width="2" height="1"/></g><rect x="2" y="4" width="1" height="1" fill="#fff"/><rect x="13" y="6" width="1" height="1" fill="#b8e4f0"/></svg></div>
<div style="left:247px;top:482px;width:11px;height:11px;border:1px solid #727272;background:#fff"></div>
<div style="right:426px;top:482.84px;font-size:12px;line-height:16px;font-weight:normal;color:#000;white-space:nowrap;">2.529</div>
<div style="right:357px;top:482.84px;font-size:12px;line-height:16px;font-weight:normal;color:#000;white-space:nowrap;">2.588</div>
<div style="right:287px;top:482.84px;font-size:12px;line-height:16px;font-weight:normal;color:#000;white-space:nowrap;">2.668</div>
<div style="right:218px;top:482.84px;font-size:12px;line-height:16px;font-weight:normal;color:#000;white-space:nowrap;">2.704</div>
<div style="right:148px;top:482.84px;font-size:12px;line-height:16px;font-weight:normal;color:#000;white-space:nowrap;">2.723</div>
<div style="right:78px;top:482.84px;font-size:12px;line-height:16px;font-weight:normal;color:#000;white-space:nowrap;">2.781</div>
<div style="left:704.5px;top:484.36px;font-size:10.5px;line-height:16px;font-weight:normal;color:#26268f;white-space:nowrap;">2000-2019</div>
<div style="left:7px;top:500px;width:756px;height:1px;background:#b4b4b4"></div>
<div style="left:7px;top:501px;width:196px;height:23px;background:#ffffe0"></div>
<div style="left:696px;top:501px;width:67px;height:23px;background:#eeeef0"></div>
<div style="left:12px;top:504.84px;font-size:12px;line-height:16px;font-weight:normal;color:#000;white-space:nowrap;">Ohio</div>
<div style="left:220px;top:507px;width:16px;height:10px"><svg width="16" height="10" viewBox="0 0 16 10" shape-rendering="crispEdges"><g fill="#86cbec"><rect x="3" y="0" width="3" height="1"/><rect x="2" y="1" width="5" height="1"/><rect x="1" y="2" width="6" height="1"/><rect x="0" y="3" width="16" height="1"/><rect x="0" y="4" width="16" height="1"/><rect x="0" y="5" width="9" height="1"/><rect x="11" y="5" width="5" height="1"/><rect x="1" y="6" width="6" height="1"/><rect x="11" y="6" width="5" height="1"/><rect x="2" y="7" width="5" height="1"/><rect x="2" y="8" width="4" height="1"/><rect x="3" y="9" width="2" height="1"/></g><rect x="2" y="4" width="1" height="1" fill="#fff"/><rect x="13" y="6" width="1" height="1" fill="#b8e4f0"/></svg></div>
<div style="left:247px;top:506px;width:11px;height:11px;border:1px solid #727272;background:#fff"></div>
<div style="right:426px;top:506.84px;font-size:12px;line-height:16px;font-weight:normal;color:#000;white-space:nowrap;">2.427</div>
<div style="right:357px;top:506.84px;font-size:12px;line-height:16px;font-weight:normal;color:#000;white-space:nowrap;">2.491</div>
<div style="right:287px;top:506.84px;font-size:12px;line-height:16px;font-weight:normal;color:#000;white-space:nowrap;">2.378</div>
<div style="right:218px;top:506.84px;font-size:12px;line-height:16px;font-weight:normal;color:#000;white-space:nowrap;">2.548</div>
<div style="right:148px;top:506.84px;font-size:12px;line-height:16px;font-weight:normal;color:#000;white-space:nowrap;">2.599</div>
<div style="right:78px;top:506.84px;font-size:12px;line-height:16px;font-weight:normal;color:#000;white-space:nowrap;">2.699</div>
<div style="left:704.5px;top:508.36px;font-size:10.5px;line-height:16px;font-weight:normal;color:#26268f;white-space:nowrap;">2003-2019</div>
<div style="left:7px;top:524px;width:756px;height:1px;background:#b4b4b4"></div>
<div style="left:7px;top:525px;width:196px;height:23px;background:#ffffe0"></div>
<div style="left:696px;top:525px;width:67px;height:23px;background:#eeeef0"></div>
<div style="left:12px;top:528.84px;font-size:12px;line-height:16px;font-weight:normal;color:#000;white-space:nowrap;">Texas</div>
<div style="left:220px;top:531px;width:16px;height:10px"><svg width="16" height="10" viewBox="0 0 16 10" shape-rendering="crispEdges"><g fill="#86cbec"><rect x="3" y="0" width="3" height="1"/><rect x="2" y="1" width="5" height="1"/><rect x="1" y="2" width="6" height="1"/><rect x="0" y="3" width="16" height="1"/><rect x="0" y="4" width="16" height="1"/><rect x="0" y="5" width="9" height="1"/><rect x="11" y="5" width="5" height="1"/><rect x="1" y="6" width="6" height="1"/><rect x="11" y="6" width="5" height="1"/><rect x="2" y="7" width="5" height="1"/><rect x="2" y="8" width="4" height="1"/><rect x="3" y="9" width="2" height="1"/></g><rect x="2" y="4" width="1" height="1" fill="#fff"/><rect x="13" y="6" width="1" height="1" fill="#b8e4f0"/></svg></div>
<div style="left:247px;top:530px;width:11px;height:11px;border:1px solid #727272;background:#fff"></div>
<div style="right:426px;top:530.84px;font-size:12px;line-height:16px;font-weight:normal;color:#000;white-space:nowrap;">2.235</div>
<div style="right:357px;top:530.84px;font-size:12px;line-height:16px;font-weight:normal;color:#000;white-space:nowrap;">2.276</div>
<div style="right:287px;top:530.84px;font-size:12px;line-height:16px;font-weight:normal;color:#000;white-space:nowrap;">2.361</div>
<div style="right:218px;top:530.84px;font-size:12px;line-height:16px;font-weight:normal;color:#000;white-space:nowrap;">2.448</div>
<div style="right:148px;top:530.84px;font-size:12px;line-height:16px;font-weight:normal;color:#000;white-space:nowrap;">2.523</div>
<div style="right:78px;top:530.84px;font-size:12px;line-height:16px;font-weight:normal;color:#000;white-space:nowrap;">2.521</div>
<div style="left:704.5px;top:532.36px;font-size:10.5px;line-height:16px;font-weight:normal;color:#26268f;white-space:nowrap;">2000-2019</div>
<div style="left:7px;top:548px;width:756px;height:1px;background:#b4b4b4"></div>
<div style="left:7px;top:549px;width:196px;height:23px;background:#ffffe0"></div>
<div style="left:696px;top:549px;width:67px;height:23px;background:#eeeef0"></div>
<div style="left:12px;top:552.84px;font-size:12px;line-height:16px;font-weight:normal;color:#000;white-space:nowrap;">Washington</div>
<div style="left:220px;top:555px;width:16px;height:10px"><svg width="16" height="10" viewBox="0 0 16 10" shape-rendering="crispEdges"><g fill="#86cbec"><rect x="3" y="0" width="3" height="1"/><rect x="2" y="1" width="5" height="1"/><rect x="1" y="2" width="6" height="1"/><rect x="0" y="3" width="16" height="1"/><rect x="0" y="4" width="16" height="1"/><rect x="0" y="5" width="9" height="1"/><rect x="11" y="5" width="5" height="1"/><rect x="1" y="6" width="6" height="1"/><rect x="11" y="6" width="5" height="1"/><rect x="2" y="7" width="5" height="1"/><rect x="2" y="8" width="4" height="1"/><rect x="3" y="9" width="2" height="1"/></g><rect x="2" y="4" width="1" height="1" fill="#fff"/><rect x="13" y="6" width="1" height="1" fill="#b8e4f0"/></svg></div>
<div style="left:247px;top:554px;width:11px;height:11px;border:1px solid #727272;background:#fff"></div>
<div style="right:426px;top:554.84px;font-size:12px;line-height:16px;font-weight:normal;color:#000;white-space:nowrap;">2.813</div>
<div style="right:357px;top:554.84px;font-size:12px;line-height:16px;font-weight:normal;color:#000;white-space:nowrap;">2.857</div>
<div style="right:287px;top:554.84px;font-size:12px;line-height:16px;font-weight:normal;color:#000;white-space:nowrap;">2.921</div>
<div style="right:218px;top:554.84px;font-size:12px;line-height:16px;font-weight:normal;color:#000;white-space:nowrap;">3.029</div>
<div style="right:148px;top:554.84px;font-size:12px;line-height:16px;font-weight:normal;color:#000;white-space:nowrap;">3.114</div>
<div style="right:78px;top:554.84px;font-size:12px;line-height:16px;font-weight:normal;color:#000;white-space:nowrap;">3.214</div>
<div style="left:704.5px;top:556.36px;font-size:10.5px;line-height:16px;font-weight:normal;color:#26268f;white-space:nowrap;">2003-2019</div>
<div style="left:7px;top:572px;width:756px;height:1px;background:#b4b4b4"></div>
<div style="left:7px;top:573px;width:196px;height:21px;background:#cccc99"></div>
<div style="left:7px;top:573px;width:1px;height:21px;background:#dcd79e"></div>
<div style="left:11px;top:575.84px;font-size:12px;line-height:16px;font-weight:bold;color:#000;white-space:nowrap;">Cities</div>
<div style="left:204px;top:573px;width:73px;height:21px;background-color:#606060;background-image:linear-gradient(to bottom, transparent 1px, #fff 1px),linear-gradient(to right, transparent 1px, #fff 1px);background-size:3px 3px;background-position:1px 1px"></div>
<div style="left:204px;top:573px;width:73px;height:1px;background:#fff"></div>
<div style="left:204px;top:573px;width:1px;height:21px;background:#fff"></div>
<div style="left:278px;top:573px;width:69px;height:21px;background-color:#606060;background-image:linear-gradient(to bottom, transparent 1px, #fff 1px),linear-gradient(to right, transparent 1px, #fff 1px);background-size:3px 3px;background-position:1px 1px"></div>
<div style="left:278px;top:573px;width:69px;height:1px;background:#fff"></div>
<div style="left:278px;top:573px;width:1px;height:21px;background:#fff"></div>
<div style="left:348px;top:573px;width:68px;height:21px;background-color:#606060;background-image:linear-gradient(to bottom, transparent 1px, #fff 1px),linear-gradient(to right, transparent 1px, #fff 1px);background-size:3px 3px;background-position:1px 1px"></div>
<div style="left:348px;top:573px;width:68px;height:1px;background:#fff"></div>
<div style="left:348px;top:573px;width:1px;height:21px;background:#fff"></div>
<div style="left:417px;top:573px;width:69px;height:21px;background-color:#606060;background-image:linear-gradient(to bottom, transparent 1px, #fff 1px),linear-gradient(to right, transparent 1px, #fff 1px);background-size:3px 3px;background-position:1px 1px"></div>
<div style="left:417px;top:573px;width:69px;height:1px;background:#fff"></div>
<div style="left:417px;top:573px;width:1px;height:21px;background:#fff"></div>
<div style="left:487px;top:573px;width:68px;height:21px;background-color:#606060;background-image:linear-gradient(to bottom, transparent 1px, #fff 1px),linear-gradient(to right, transparent 1px, #fff 1px);background-size:3px 3px;background-position:1px 1px"></div>
<div style="left:487px;top:573px;width:68px;height:1px;background:#fff"></div>
<div style="left:487px;top:573px;width:1px;height:21px;background:#fff"></div>
<div style="left:556px;top:573px;width:69px;height:21px;background-color:#606060;background-image:linear-gradient(to bottom, transparent 1px, #fff 1px),linear-gradient(to right, transparent 1px, #fff 1px);background-size:3px 3px;background-position:1px 1px"></div>
<div style="left:556px;top:573px;width:69px;height:1px;background:#fff"></div>
<div style="left:556px;top:573px;width:1px;height:21px;background:#fff"></div>
<div style="left:626px;top:573px;width:69px;height:21px;background-color:#606060;background-image:linear-gradient(to bottom, transparent 1px, #fff 1px),linear-gradient(to right, transparent 1px, #fff 1px);background-size:3px 3px;background-position:1px 1px"></div>
<div style="left:626px;top:573px;width:69px;height:1px;background:#fff"></div>
<div style="left:626px;top:573px;width:1px;height:21px;background:#fff"></div>
<div style="left:696px;top:573px;width:67px;height:21px;background-color:#606060;background-image:linear-gradient(to bottom, transparent 1px, #fff 1px),linear-gradient(to right, transparent 1px, #fff 1px);background-size:3px 3px;background-position:1px 1px"></div>
<div style="left:696px;top:573px;width:67px;height:1px;background:#fff"></div>
<div style="left:696px;top:573px;width:1px;height:21px;background:#fff"></div>
<div style="left:7px;top:594px;width:756px;height:1px;background:#b4b4b4"></div>
<div style="left:7px;top:595px;width:196px;height:23px;background:#ffffe0"></div>
<div style="left:696px;top:595px;width:67px;height:23px;background:#eeeef0"></div>
<div style="left:12px;top:597.84px;font-size:12px;line-height:16px;font-weight:normal;color:#000;white-space:nowrap;">Boston</div>
<div style="left:220px;top:601px;width:16px;height:10px"><svg width="16" height="10" viewBox="0 0 16 10" shape-rendering="crispEdges"><g fill="#86cbec"><rect x="3" y="0" width="3" height="1"/><rect x="2" y="1" width="5" height="1"/><rect x="1" y="2" width="6" height="1"/><rect x="0" y="3" width="16" height="1"/><rect x="0" y="4" width="16" height="1"/><rect x="0" y="5" width="9" height="1"/><rect x="11" y="5" width="5" height="1"/><rect x="1" y="6" width="6" height="1"/><rect x="11" y="6" width="5" height="1"/><rect x="2" y="7" width="5" height="1"/><rect x="2" y="8" width="4" height="1"/><rect x="3" y="9" width="2" height="1"/></g><rect x="2" y="4" width="1" height="1" fill="#fff"/><rect x="13" y="6" width="1" height="1" fill="#b8e4f0"/></svg></div>
<div style="left:247px;top:600px;width:11px;height:11px;border:1px solid #727272;background:#fff"></div>
<div style="right:426px;top:600.84px;font-size:12px;line-height:16px;font-weight:normal;color:#000;white-space:nowrap;">2.484</div>
<div style="right:357px;top:600.84px;font-size:12px;line-height:16px;font-weight:normal;color:#000;white-space:nowrap;">2.491</div>
<div style="right:287px;top:600.84px;font-size:12px;line-height:16px;font-weight:normal;color:#000;white-space:nowrap;">2.543</div>
<div style="right:218px;top:600.84px;font-size:12px;line-height:16px;font-weight:normal;color:#000;white-space:nowrap;">2.610</div>
<div style="right:148px;top:600.84px;font-size:12px;line-height:16px;font-weight:normal;color:#000;white-space:nowrap;">2.638</div>
<div style="right:78px;top:600.84px;font-size:12px;line-height:16px;font-weight:normal;color:#000;white-space:nowrap;">2.654</div>
<div style="left:704.5px;top:601.36px;font-size:10.5px;line-height:16px;font-weight:normal;color:#26268f;white-space:nowrap;">2003-2019</div>
<div style="left:7px;top:618px;width:756px;height:1px;background:#b4b4b4"></div>
<div style="left:7px;top:619px;width:196px;height:23px;background:#ffffe0"></div>
<div style="left:696px;top:619px;width:67px;height:23px;background:#eeeef0"></div>
<div style="left:12px;top:621.84px;font-size:12px;line-height:16px;font-weight:normal;color:#000;white-space:nowrap;">Chicago</div>
<div style="left:220px;top:625px;width:16px;height:10px"><svg width="16" height="10" viewBox="0 0 16 10" shape-rendering="crispEdges"><g fill="#86cbec"><rect x="3" y="0" width="3" height="1"/><rect x="2" y="1" width="5" height="1"/><rect x="1" y="2" width="6" height="1"/><rect x="0" y="3" width="16" height="1"/><rect x="0" y="4" width="16" height="1"/><rect x="0" y="5" width="9" height="1"/><rect x="11" y="5" width="5" height="1"/><rect x="1" y="6" width="6" height="1"/><rect x="11" y="6" width="5" height="1"/><rect x="2" y="7" width="5" height="1"/><rect x="2" y="8" width="4" height="1"/><rect x="3" y="9" width="2" height="1"/></g><rect x="2" y="4" width="1" height="1" fill="#fff"/><rect x="13" y="6" width="1" height="1" fill="#b8e4f0"/></svg></div>
<div style="left:247px;top:624px;width:11px;height:11px;border:1px solid #727272;background:#fff"></div>
<div style="right:426px;top:624.84px;font-size:12px;line-height:16px;font-weight:normal;color:#000;white-space:nowrap;">2.578</div>
<div style="right:357px;top:624.84px;font-size:12px;line-height:16px;font-weight:normal;color:#000;white-space:nowrap;">2.665</div>
<div style="right:287px;top:624.84px;font-size:12px;line-height:16px;font-weight:normal;color:#000;white-space:nowrap;">2.800</div>
<div style="right:218px;top:624.84px;font-size:12px;line-height:16px;font-weight:normal;color:#000;white-space:nowrap;">2.880</div>
<div style="right:148px;top:624.84px;font-size:12px;line-height:16px;font-weight:normal;color:#000;white-space:nowrap;">3.002</div>
<div style="right:78px;top:624.84px;font-size:12px;line-height:16px;font-weight:normal;color:#000;white-space:nowrap;">3.098</div>
<div style="left:704.5px;top:625.36px;font-size:10.5px;line-height:16px;font-weight:normal;color:#26268f;white-space:nowrap;">2000-2019</div>
<div style="left:7px;top:642px;width:756px;height:1px;background:#b4b4b4"></div>
<div style="left:7px;top:643px;width:196px;height:23px;background:#ffffe0"></div>
<div style="left:696px;top:643px;width:67px;height:23px;background:#eeeef0"></div>
<div style="left:12px;top:645.84px;font-size:12px;line-height:16px;font-weight:normal;color:#000;white-space:nowrap;">Cleveland</div>
<div style="left:220px;top:649px;width:16px;height:10px"><svg width="16" height="10" viewBox="0 0 16 10" shape-rendering="crispEdges"><g fill="#86cbec"><rect x="3" y="0" width="3" height="1"/><rect x="2" y="1" width="5" height="1"/><rect x="1" y="2" width="6" height="1"/><rect x="0" y="3" width="16" height="1"/><rect x="0" y="4" width="16" height="1"/><rect x="0" y="5" width="9" height="1"/><rect x="11" y="5" width="5" height="1"/><rect x="1" y="6" width="6" height="1"/><rect x="11" y="6" width="5" height="1"/><rect x="2" y="7" width="5" height="1"/><rect x="2" y="8" width="4" height="1"/><rect x="3" y="9" width="2" height="1"/></g><rect x="2" y="4" width="1" height="1" fill="#fff"/><rect x="13" y="6" width="1" height="1" fill="#b8e4f0"/></svg></div>
<div style="left:247px;top:648px;width:11px;height:11px;border:1px solid #727272;background:#fff"></div>
<div style="right:426px;top:648.84px;font-size:12px;line-height:16px;font-weight:normal;color:#000;white-space:nowrap;">2.412</div>
<div style="right:357px;top:648.84px;font-size:12px;line-height:16px;font-weight:normal;color:#000;white-space:nowrap;">2.497</div>
<div style="right:287px;top:648.84px;font-size:12px;line-height:16px;font-weight:normal;color:#000;white-space:nowrap;">2.502</div>
<div style="right:218px;top:648.84px;font-size:12px;line-height:16px;font-weight:normal;color:#000;white-space:nowrap;">2.566</div>
<div style="right:148px;top:648.84px;font-size:12px;line-height:16px;font-weight:normal;color:#000;white-space:nowrap;">2.650</div>
<div style="right:78px;top:648.84px;font-size:12px;line-height:16px;font-weight:normal;color:#000;white-space:nowrap;">2.693</div>
<div style="left:704.5px;top:649.36px;font-size:10.5px;line-height:16px;font-weight:normal;color:#26268f;white-space:nowrap;">2003-2019</div>
<div style="left:7px;top:666px;width:756px;height:1px;background:#b4b4b4"></div>
<div style="left:7px;top:667px;width:196px;height:23px;background:#ffffe0"></div>
<div style="left:696px;top:667px;width:67px;height:23px;background:#eeeef0"></div>
<div style="left:12px;top:669.84px;font-size:12px;line-height:16px;font-weight:normal;color:#000;white-space:nowrap;">Denver</div>
<div style="left:220px;top:673px;width:16px;height:10px"><svg width="16" height="10" viewBox="0 0 16 10" shape-rendering="crispEdges"><g fill="#86cbec"><rect x="3" y="0" width="3" height="1"/><rect x="2" y="1" width="5" height="1"/><rect x="1" y="2" width="6" height="1"/><rect x="0" y="3" width="16" height="1"/><rect x="0" y="4" width="16" height="1"/><rect x="0" y="5" width="9" height="1"/><rect x="11" y="5" width="5" height="1"/><rect x="1" y="6" width="6" height="1"/><rect x="11" y="6" width="5" height="1"/><rect x="2" y="7" width="5" height="1"/><rect x="2" y="8" width="4" height="1"/><rect x="3" y="9" width="2" height="1"/></g><rect x="2" y="4" width="1" height="1" fill="#fff"/><rect x="13" y="6" width="1" height="1" fill="#b8e4f0"/></svg></div>
<div style="left:247px;top:672px;width:11px;height:11px;border:1px solid #727272;background:#fff"></div>
<div style="right:426px;top:672.84px;font-size:12px;line-height:16px;font-weight:normal;color:#000;white-space:nowrap;">2.288</div>
<div style="right:357px;top:672.84px;font-size:12px;line-height:16px;font-weight:normal;color:#000;white-space:nowrap;">2.329</div>
<div style="right:287px;top:672.84px;font-size:12px;line-height:16px;font-weight:normal;color:#000;white-space:nowrap;">2.458</div>
<div style="right:218px;top:672.84px;font-size:12px;line-height:16px;font-weight:normal;color:#000;white-space:nowrap;">2.528</div>
<div style="right:148px;top:672.84px;font-size:12px;line-height:16px;font-weight:normal;color:#000;white-space:nowrap;">2.576</div>
<div style="right:78px;top:672.84px;font-size:12px;line-height:16px;font-weight:normal;color:#000;white-space:nowrap;">2.617</div>
<div style="left:704.5px;top:673.36px;font-size:10.5px;line-height:16px;font-weight:normal;color:#26268f;white-space:nowrap;">2000-2019</div>
<div style="left:7px;top:690px;width:756px;height:1px;background:#b4b4b4"></div>
<div style="left:7px;top:691px;width:196px;height:23px;background:#ffffe0"></div>
<div style="left:696px;top:691px;width:67px;height:23px;background:#eeeef0"></div>
<div style="left:12px;top:693.84px;font-size:12px;line-height:16px;font-weight:normal;color:#000;white-space:nowrap;">Houston</div>
<div style="left:220px;top:697px;width:16px;height:10px"><svg width="16" height="10" viewBox="0 0 16 10" shape-rendering="crispEdges"><g fill="#86cbec"><rect x="3" y="0" width="3" height="1"/><rect x="2" y="1" width="5" height="1"/><rect x="1" y="2" width="6" height="1"/><rect x="0" y="3" width="16" height="1"/><rect x="0" y="4" width="16" height="1"/><rect x="0" y="5" width="9" height="1"/><rect x="11" y="5" width="5" height="1"/><rect x="1" y="6" width="6" height="1"/><rect x="11" y="6" width="5" height="1"/><rect x="2" y="7" width="5" height="1"/><rect x="2" y="8" width="4" height="1"/><rect x="3" y="9" width="2" height="1"/></g><rect x="2" y="4" width="1" height="1" fill="#fff"/><rect x="13" y="6" width="1" height="1" fill="#b8e4f0"/></svg></div>
<div style="left:247px;top:696px;width:11px;height:11px;border:1px solid #727272;background:#fff"></div>
<div style="right:426px;top:696.84px;font-size:12px;line-height:16px;font-weight:normal;color:#000;white-space:nowrap;">2.222</div>
<div style="right:357px;top:696.84px;font-size:12px;line-height:16px;font-weight:normal;color:#000;white-space:nowrap;">2.304</div>
<div style="right:287px;top:696.84px;font-size:12px;line-height:16px;font-weight:normal;color:#000;white-space:nowrap;">2.410</div>
<div style="right:218px;top:696.84px;font-size:12px;line-height:16px;font-weight:normal;color:#000;white-space:nowrap;">2.489</div>
<div style="right:148px;top:696.84px;font-size:12px;line-height:16px;font-weight:normal;color:#000;white-space:nowrap;">2.540</div>
<div style="right:78px;top:696.84px;font-size:12px;line-height:16px;font-weight:normal;color:#000;white-space:nowrap;">2.584</div>
<div style="left:704.5px;top:697.36px;font-size:10.5px;line-height:16px;font-weight:normal;color:#26268f;white-space:nowrap;">2000-2019</div>
<div style="left:7px;top:714px;width:756px;height:1px;background:#b4b4b4"></div>
<div style="left:7px;top:715px;width:196px;height:23px;background:#ffffe0"></div>
<div style="left:696px;top:715px;width:67px;height:23px;background:#eeeef0"></div>
<div style="left:12px;top:717.84px;font-size:12px;line-height:16px;font-weight:normal;color:#000;white-space:nowrap;">Los Angeles</div>
<div style="left:220px;top:721px;width:16px;height:10px"><svg width="16" height="10" viewBox="0 0 16 10" shape-rendering="crispEdges"><g fill="#86cbec"><rect x="3" y="0" width="3" height="1"/><rect x="2" y="1" width="5" height="1"/><rect x="1" y="2" width="6" height="1"/><rect x="0" y="3" width="16" height="1"/><rect x="0" y="4" width="16" height="1"/><rect x="0" y="5" width="9" height="1"/><rect x="11" y="5" width="5" height="1"/><rect x="1" y="6" width="6" height="1"/><rect x="11" y="6" width="5" height="1"/><rect x="2" y="7" width="5" height="1"/><rect x="2" y="8" width="4" height="1"/><rect x="3" y="9" width="2" height="1"/></g><rect x="2" y="4" width="1" height="1" fill="#fff"/><rect x="13" y="6" width="1" height="1" fill="#b8e4f0"/></svg></div>
<div style="left:247px;top:720px;width:11px;height:11px;border:1px solid #727272;background:#fff"></div>
<div style="right:426px;top:720.84px;font-size:12px;line-height:16px;font-weight:normal;color:#000;white-space:nowrap;">3.275</div>
<div style="right:357px;top:720.84px;font-size:12px;line-height:16px;font-weight:normal;color:#000;white-space:nowrap;">3.288</div>
<div style="right:287px;top:720.84px;font-size:12px;line-height:16px;font-weight:normal;color:#000;white-space:nowrap;">3.315</div>
<div style="right:218px;top:720.84px;font-size:12px;line-height:16px;font-weight:normal;color:#000;white-space:nowrap;">3.460</div>
<div style="right:148px;top:720.84px;font-size:12px;line-height:16px;font-weight:normal;color:#000;white-space:nowrap;">3.612</div>
<div style="right:78px;top:720.84px;font-size:12px;line-height:16px;font-weight:normal;color:#000;white-space:nowrap;">3.821</div>
<div style="left:704.5px;top:721.36px;font-size:10.5px;line-height:16px;font-weight:normal;color:#26268f;white-space:nowrap;">2000-2019</div>
<div style="left:7px;top:738px;width:756px;height:1px;background:#b4b4b4"></div>
<div style="left:7px;top:739px;width:196px;height:23px;background:#ffffe0"></div>
<div style="left:696px;top:739px;width:67px;height:23px;background:#eeeef0"></div>
<div style="left:12px;top:741.84px;font-size:12px;line-height:16px;font-weight:normal;color:#000;white-space:nowrap;">Miami</div>
<div style="left:220px;top:745px;width:16px;height:10px"><svg width="16" height="10" viewBox="0 0 16 10" shape-rendering="crispEdges"><g fill="#86cbec"><rect x="3" y="0" width="3" height="1"/><rect x="2" y="1" width="5" height="1"/><rect x="1" y="2" width="6" height="1"/><rect x="0" y="3" width="16" height="1"/><rect x="0" y="4" width="16" height="1"/><rect x="0" y="5" width="9" height="1"/><rect x="11" y="5" width="5" height="1"/><rect x="1" y="6" width="6" height="1"/><rect x="11" y="6" width="5" height="1"/><rect x="2" y="7" width="5" height="1"/><rect x="2" y="8" width="4" height="1"/><rect x="3" y="9" width="2" height="1"/></g><rect x="2" y="4" width="1" height="1" fill="#fff"/><rect x="13" y="6" width="1" height="1" fill="#b8e4f0"/></svg></div>
<div style="left:247px;top:744px;width:11px;height:11px;border:1px solid #727272;background:#fff"></div>
<div style="right:426px;top:744.84px;font-size:12px;line-height:16px;font-weight:normal;color:#000;white-space:nowrap;">2.550</div>
<div style="right:357px;top:744.84px;font-size:12px;line-height:16px;font-weight:normal;color:#000;white-space:nowrap;">2.563</div>
<div style="right:287px;top:744.84px;font-size:12px;line-height:16px;font-weight:normal;color:#000;white-space:nowrap;">2.724</div>
<div style="right:218px;top:744.84px;font-size:12px;line-height:16px;font-weight:normal;color:#000;white-space:nowrap;">2.737</div>
<div style="right:148px;top:744.84px;font-size:12px;line-height:16px;font-weight:normal;color:#000;white-space:nowrap;">2.833</div>
<div style="right:78px;top:744.84px;font-size:12px;line-height:16px;font-weight:normal;color:#000;white-space:nowrap;">2.803</div>
<div style="left:704.5px;top:745.36px;font-size:10.5px;line-height:16px;font-weight:normal;color:#26268f;white-space:nowrap;">2003-2019</div>
<div style="left:7px;top:762px;width:756px;height:1px;background:#b4b4b4"></div>
<div style="left:7px;top:763px;width:196px;height:23px;background:#ffffe0"></div>
<div style="left:696px;top:763px;width:67px;height:23px;background:#eeeef0"></div>
<div style="left:12px;top:765.84px;font-size:12px;line-height:16px;font-weight:normal;color:#000;white-space:nowrap;">New York City</div>
<div style="left:220px;top:769px;width:16px;height:10px"><svg width="16" height="10" viewBox="0 0 16 10" shape-rendering="crispEdges"><g fill="#86cbec"><rect x="3" y="0" width="3" height="1"/><rect x="2" y="1" width="5" height="1"/><rect x="1" y="2" width="6" height="1"/><rect x="0" y="3" width="16" height="1"/><rect x="0" y="4" width="16" height="1"/><rect x="0" y="5" width="9" height="1"/><rect x="11" y="5" width="5" height="1"/><rect x="1" y="6" width="6" height="1"/><rect x="11" y="6" width="5" height="1"/><rect x="2" y="7" width="5" height="1"/><rect x="2" y="8" width="4" height="1"/><rect x="3" y="9" width="2" height="1"/></g><rect x="2" y="4" width="1" height="1" fill="#fff"/><rect x="13" y="6" width="1" height="1" fill="#b8e4f0"/></svg></div>
<div style="left:247px;top:768px;width:11px;height:11px;border:1px solid #727272;background:#fff"></div>
<div style="right:426px;top:768.84px;font-size:12px;line-height:16px;font-weight:normal;color:#000;white-space:nowrap;">2.528</div>
<div style="right:357px;top:768.84px;font-size:12px;line-height:16px;font-weight:normal;color:#000;white-space:nowrap;">2.587</div>
<div style="right:287px;top:768.84px;font-size:12px;line-height:16px;font-weight:normal;color:#000;white-space:nowrap;">2.658</div>
<div style="right:218px;top:768.84px;font-size:12px;line-height:16px;font-weight:normal;color:#000;white-space:nowrap;">2.720</div>
<div style="right:148px;top:768.84px;font-size:12px;line-height:16px;font-weight:normal;color:#000;white-space:nowrap;">2.737</div>
<div style="right:78px;top:768.84px;font-size:12px;line-height:16px;font-weight:normal;color:#000;white-space:nowrap;">2.782</div>
<div style="left:704.5px;top:769.36px;font-size:10.5px;line-height:16px;font-weight:normal;color:#26268f;white-space:nowrap;">2000-2019</div>
<div style="left:7px;top:786px;width:756px;height:1px;background:#b4b4b4"></div>
<div style="left:7px;top:787px;width:196px;height:23px;background:#ffffe0"></div>
<div style="left:696px;top:787px;width:67px;height:23px;background:#eeeef0"></div>
<div style="left:12px;top:789.84px;font-size:12px;line-height:16px;font-weight:normal;color:#000;white-space:nowrap;">San Francisco</div>
<div style="left:220px;top:793px;width:16px;height:10px"><svg width="16" height="10" viewBox="0 0 16 10" shape-rendering="crispEdges"><g fill="#86cbec"><rect x="3" y="0" width="3" height="1"/><rect x="2" y="1" width="5" height="1"/><rect x="1" y="2" width="6" height="1"/><rect x="0" y="3" width="16" height="1"/><rect x="0" y="4" width="16" height="1"/><rect x="0" y="5" width="9" height="1"/><rect x="11" y="5" width="5" height="1"/><rect x="1" y="6" width="6" height="1"/><rect x="11" y="6" width="5" height="1"/><rect x="2" y="7" width="5" height="1"/><rect x="2" y="8" width="4" height="1"/><rect x="3" y="9" width="2" height="1"/></g><rect x="2" y="4" width="1" height="1" fill="#fff"/><rect x="13" y="6" width="1" height="1" fill="#b8e4f0"/></svg></div>
<div style="left:247px;top:792px;width:11px;height:11px;border:1px solid #727272;background:#fff"></div>
<div style="right:426px;top:792.84px;font-size:12px;line-height:16px;font-weight:normal;color:#000;white-space:nowrap;">3.365</div>
<div style="right:357px;top:792.84px;font-size:12px;line-height:16px;font-weight:normal;color:#000;white-space:nowrap;">3.398</div>
<div style="right:287px;top:792.84px;font-size:12px;line-height:16px;font-weight:normal;color:#000;white-space:nowrap;">3.453</div>
<div style="right:218px;top:792.84px;font-size:12px;line-height:16px;font-weight:normal;color:#000;white-space:nowrap;">3.552</div>
<div style="right:148px;top:792.84px;font-size:12px;line-height:16px;font-weight:normal;color:#000;white-space:nowrap;">3.657</div>
<div style="right:78px;top:792.84px;font-size:12px;line-height:16px;font-weight:normal;color:#000;white-space:nowrap;">3.844</div>
<div style="left:704.5px;top:793.36px;font-size:10.5px;line-height:16px;font-weight:normal;color:#26268f;white-space:nowrap;">2000-2019</div>
<div style="left:7px;top:810px;width:756px;height:1px;background:#b4b4b4"></div>
<div style="left:7px;top:811px;width:196px;height:23px;background:#ffffe0"></div>
<div style="left:696px;top:811px;width:67px;height:23px;background:#eeeef0"></div>
<div style="left:12px;top:813.84px;font-size:12px;line-height:16px;font-weight:normal;color:#000;white-space:nowrap;">Seattle</div>
<div style="left:220px;top:817px;width:16px;height:10px"><svg width="16" height="10" viewBox="0 0 16 10" shape-rendering="crispEdges"><g fill="#86cbec"><rect x="3" y="0" width="3" height="1"/><rect x="2" y="1" width="5" height="1"/><rect x="1" y="2" width="6" height="1"/><rect x="0" y="3" width="16" height="1"/><rect x="0" y="4" width="16" height="1"/><rect x="0" y="5" width="9" height="1"/><rect x="11" y="5" width="5" height="1"/><rect x="1" y="6" width="6" height="1"/><rect x="11" y="6" width="5" height="1"/><rect x="2" y="7" width="5" height="1"/><rect x="2" y="8" width="4" height="1"/><rect x="3" y="9" width="2" height="1"/></g><rect x="2" y="4" width="1" height="1" fill="#fff"/><rect x="13" y="6" width="1" height="1" fill="#b8e4f0"/></svg></div>
<div style="left:247px;top:816px;width:11px;height:11px;border:1px solid #727272;background:#fff"></div>
<div style="right:426px;top:816.84px;font-size:12px;line-height:16px;font-weight:normal;color:#000;white-space:nowrap;">3.041</div>
<div style="right:357px;top:816.84px;font-size:12px;line-height:16px;font-weight:normal;color:#000;white-space:nowrap;">3.074</div>
<div style="right:287px;top:816.84px;font-size:12px;line-height:16px;font-weight:normal;color:#000;white-space:nowrap;">3.118</div>
<div style="right:218px;top:816.84px;font-size:12px;line-height:16px;font-weight:normal;color:#000;white-space:nowrap;">3.197</div>
<div style="right:148px;top:816.84px;font-size:12px;line-height:16px;font-weight:normal;color:#000;white-space:nowrap;">3.288</div>
<div style="right:78px;top:816.84px;font-size:12px;line-height:16px;font-weight:normal;color:#000;white-space:nowrap;">3.380</div>
<div style="left:704.5px;top:817.36px;font-size:10.5px;line-height:16px;font-weight:normal;color:#26268f;white-space:nowrap;">2003-2019</div>
<div style="left:203px;top:95px;width:1px;height:739px;background:#b4b4b4"></div>
<div style="left:277px;top:95px;width:1px;height:739px;background:#b4b4b4"></div>
<div style="left:347px;top:95px;width:1px;height:739px;background:#b4b4b4"></div>
<div style="left:416px;top:95px;width:1px;height:739px;background:#b4b4b4"></div>
<div style="left:486px;top:95px;width:1px;height:739px;background:#b4b4b4"></div>
<div style="left:555px;top:95px;width:1px;height:739px;background:#b4b4b4"></div>
<div style="left:625px;top:95px;width:1px;height:739px;background:#b4b4b4"></div>
<div style="left:695px;top:95px;width:1px;height:739px;background:#b4b4b4"></div>
<div style="left:6px;top:842px;width:16px;height:10px"><svg width="16" height="10" viewBox="0 0 16 10" shape-rendering="crispEdges"><g fill="#1c90dc"><rect x="3" y="0" width="3" height="1"/><rect x="2" y="1" width="5" height="1"/><rect x="1" y="2" width="6" height="1"/><rect x="0" y="3" width="16" height="1"/><rect x="0" y="4" width="16" height="1"/><rect x="0" y="5" width="9" height="1"/><rect x="11" y="5" width="5" height="1"/><rect x="1" y="6" width="6" height="1"/><rect x="11" y="6" width="5" height="1"/><rect x="2" y="7" width="5" height="1"/><rect x="2" y="8" width="4" height="1"/><rect x="3" y="9" width="2" height="1"/></g><rect x="2" y="4" width="1" height="1" fill="#fff"/><rect x="13" y="6" width="1" height="1" fill="#7fbfe8"/></svg></div>
<div style="left:29px;top:839.30px;font-size:10.667px;line-height:16px;font-weight:normal;color:#000;white-space:nowrap;">Click on the source key icon to learn how to download series into Excel, or to embed a chart or map on your website.</div>
<div style="left:5px;top:859.30px;font-size:10.667px;line-height:16px;font-weight:normal;color:#000;white-space:nowrap;">- = No Data Reported;&nbsp; -- = Not Applicable;&nbsp; <b>NA</b> = Not Available;&nbsp; <b>W</b> = Withheld to avoid disclosure of individual company data.</div>
</body></html>
